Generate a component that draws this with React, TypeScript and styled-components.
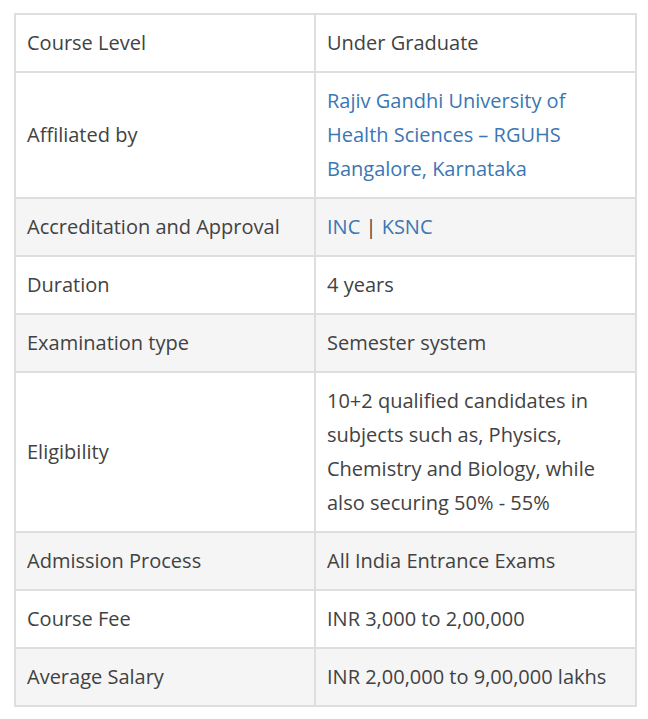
import React from 'react'
import styled, { createGlobalStyle } from 'styled-components'

const GlobalStyle = createGlobalStyle`
    html, body {
        margin: 0;
        padding: 0;
        background: #ffffff;
    }
`

const StyledPage = styled.div`
    padding: 13px 11px 13px 14px;
    font-family: "Open Sans", "Noto Sans", sans-serif;
    font-size: 20px;
    color: #424242;
`

const StyledTable = styled.table`
    width: 623px;
    border-collapse: collapse;
    table-layout: fixed;

    tbody tr:nth-child(even) {
        background-color: #f5f5f5;
    }
`

const StyledCell = styled.td<{ $width?: number }>`
    width: ${({ $width }) => ($width ? `${$width}px` : 'auto')};
    border: 2px solid #dedede;
    padding: 11px 10px 11px 11px;
    line-height: 34px;
    vertical-align: middle;
    text-align: left;
`

const StyledLink = styled.a`
    color: #3a77b4;
    text-decoration: none;
`

const rows: { label: string; value: React.ReactNode }[] = [
    {
        label: 'Affiliated by',
        value: (
            <StyledLink href='#'>
                Rajiv Gandhi University of Health Sciences – RGUHS Bangalore, Karnataka
            </StyledLink>
        ),
    },
    {
        label: 'Accreditation and Approval',
        value: (
            <>
                <StyledLink href='#'>INC</StyledLink> | <StyledLink href='#'>KSNC</StyledLink>
            </>
        ),
    },
    { label: 'Duration', value: '4 years' },
    { label: 'Examination type', value: 'Semester system' },
    {
        label: 'Eligibility',
        value: '10+2 qualified candidates in subjects such as, Physics, Chemistry and Biology, while also securing 50% - 55%',
    },
    { label: 'Admission Process', value: 'All India Entrance Exams' },
    { label: 'Course Fee', value: 'INR 3,000 to 2,00,000' },
    { label: 'Average Salary', value: 'INR 2,00,000 to 9,00,000 lakhs' },
]

const App = () => {
    return (
        <StyledPage>
            <GlobalStyle />
            <StyledTable>
                <thead>
                    <tr>
                        <StyledCell $width={277}>Course Level</StyledCell>
                        <StyledCell>Under Graduate</StyledCell>
                    </tr>
                </thead>
                <tbody>
                    {rows.map((row) => (
                        <tr key={row.label}>
                            <StyledCell $width={277}>{row.label}</StyledCell>
                            <StyledCell>{row.value}</StyledCell>
                        </tr>
                    ))}
                </tbody>
            </StyledTable>
        </StyledPage>
    )
}

export default App
